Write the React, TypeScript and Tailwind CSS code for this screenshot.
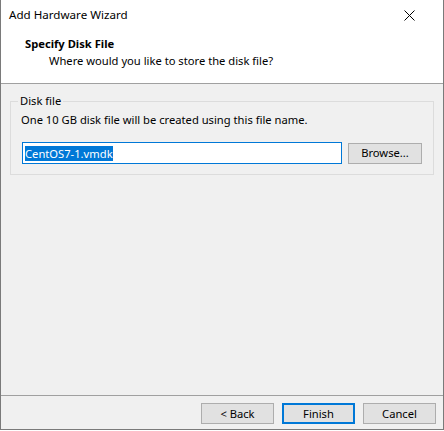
import React from "react";

export default function App() {
  const font = { fontFamily: '"Noto Sans", "Open Sans", sans-serif' };
  return (
    <div className="w-[444px] h-[431px] bg-white" style={font}>
      <div className="w-[444px] h-[430px] flex flex-col border-x border-b border-[#7a7a7a] bg-[#f0f0f0] text-[11.2px] leading-[16px] text-black">
        {/* Title bar */}
        <div className="h-[30px] bg-white flex items-center justify-between pl-[8px] pr-[28px]">
          <span className="text-[11.6px]">Add Hardware Wizard</span>
          <svg width="11" height="11" viewBox="0 0 11 11">
            <path d="M0.5 0.5 L10.5 10.5 M10.5 0.5 L0.5 10.5" stroke="#000" strokeWidth="1" />
          </svg>
        </div>
        {/* Header */}
        <div className="h-[54px] bg-white border-b border-[#a0a0a0] pl-[24px] pt-[6px]">
          <div className="font-bold">Specify Disk File</div>
          <div className="pl-[24px] mt-[1px]">Where would you like to store the disk file?</div>
        </div>
        {/* Body */}
        <div className="flex-1 px-[9px] pt-[9px]">
          <fieldset className="border border-[#dcdcdc] pl-[10px] pr-[10px] pb-[10px]">
            <legend className="ml-[-3px] px-[2px]">Disk file</legend>
            <div className="mt-[3px]">One 10 GB disk file will be created using this file name.</div>
            <div className="flex items-center gap-[6px] mt-[14px] pl-[1px]">
              <div className="w-[320px] h-[22px] bg-white border border-[#0078d7] flex items-center pl-[2px]">
                <span className="bg-[#0078d7] text-white leading-[15px]">CentOS7-1.vmdk</span>
              </div>
              <div className="w-[74px] h-[21px] bg-[#e1e1e1] border border-[#adadad] flex items-center justify-center">
                Browse...
              </div>
            </div>
          </fieldset>
        </div>
        {/* Footer */}
        <div className="border-t border-[#a0a0a0] pt-[7px] pb-[5px] pr-[7px] flex justify-end gap-[8px]">
          <div className="w-[73px] h-[21px] bg-[#e1e1e1] border border-[#adadad] flex items-center justify-center">&lt; Back</div>
          <div className="w-[73px] h-[21px] bg-[#e1e1e1] border-2 border-[#0078d7] flex items-center justify-center">Finish</div>
          <div className="w-[73px] h-[21px] bg-[#e1e1e1] border border-[#adadad] flex items-center justify-center">Cancel</div>
        </div>
      </div>
    </div>
  );
}
